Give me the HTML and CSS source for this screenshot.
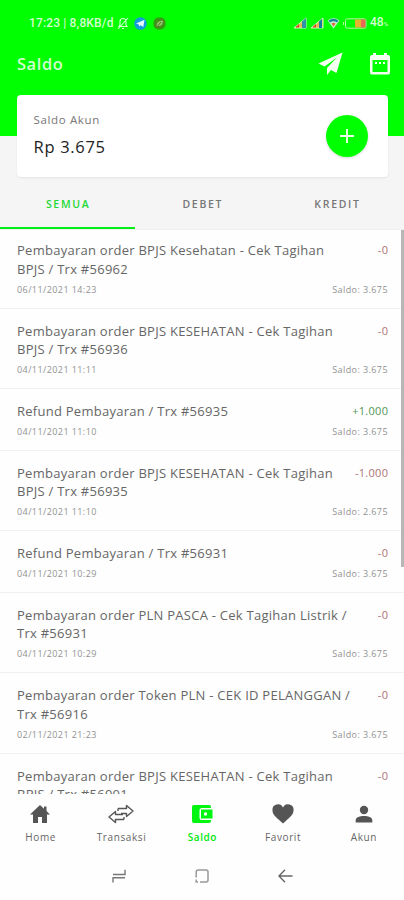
FILE: index.html
```
<!DOCTYPE html>
<html lang="id">
<head>
<meta charset="utf-8">
<title>Saldo</title>
<link rel="stylesheet" href="styles.css">
</head>
<body>
<div class="app">
  <header class="hero">
    <div class="status">
      <div class="status-left">
        <span class="clock">17:23 | 8,8KB/d</span>
        <svg class="bell" width="12" height="13" viewBox="0 0 12 13" fill="none" stroke="#d3ffd0" stroke-width="1.1"><path d="M2 9.5h8L9 8V4.500a3 3 0 0 0-6 0V8zM5 11.500h2M1 12 11 1"/></svg>
        <svg class="telegram" width="13" height="13" viewBox="0 0 13 13"><circle cx="6.500" cy="6.500" r="6.300" fill="#139bdc"/><path d="M2 6.500 10.500 2.800 9.300 10 6.500 8.300 5 9.500 4.800 7.500z" fill="#e4faff"/></svg>
        <svg width="13" height="13" viewBox="0 0 13 13"><rect x=".5" y=".5" width="12" height="12" rx="5" fill="#369b12"/><path d="M3 9.500C3 5 6 3 10.500 3c0 5-2.500 7-6 6.500M3 11l5-6" fill="#8fca67" stroke="#55752b"/></svg>
      </div>
      <div class="status-right">
        <svg width="14" height="12" viewBox="0 0 14 12"><path d="M1 11 13 1v10z" fill="#e6b653" stroke="#c9ffc0"/><path d="M9 4.500 13 1v10H9z" fill="#2f93a8"/><path d="m3 9.500 3-2.500v3.500H3z" fill="#d64a32"/></svg>
        <svg width="14" height="12" viewBox="0 0 14 12"><path d="M1 11 13 1v10z" fill="#e6b653" stroke="#c9ffc0"/><path d="M9 4.500 12 2v9H9z" fill="#147da0"/><path d="m3 9.500 3-2.500v3.500H3z" fill="#d64a32"/></svg>
        <svg width="13" height="12" viewBox="0 0 13 12"><path d="M.5 3.500Q6.500-1.500 12.500 3.500L6.500 11.500z" fill="#c4efcb"/><path d="M1.500 3.700Q6.500 0 11.500 3.700L10 5.500Q6.500 3 3 5.500z" fill="#16869b"/><path d="M4.500 6.500q2-1.300 4 0l-2 3z" fill="#dd6540"/></svg>
        <svg class="battery" width="24" height="11" viewBox="0 0 24 11"><rect x="2.500" y=".8" width="20.500" height="9.400" rx="1.800" fill="none" stroke="#b5f5a0"/><path d="M.5 4v3" stroke="#b5f5a0"/><path d="M12 1.500h6v8h-6z" fill="#e5b52f"/><path d="M18 1.500h4.500v8H18z" fill="#eb6857"/></svg>
        <span class="percent">48<small>%</small></span>
      </div>
    </div>
    <div class="toolbar">
      <h1>Saldo</h1>
      <div class="actions">
        <svg width="25" height="24" viewBox="0 0 25 24" fill="#f4fff2"><path d="M.5 11.500 24.500.5 18.500 21l-5.500-3-4 5v-7L19 5.500 6.500 14.500z"/></svg>
        <svg width="20" height="22" viewBox="0 0 20 22"><path fill="#f4fff2" fill-rule="evenodd" d="M3 0h3v2h8V0h3v2h1q2 0 2 2v15.500q0 2-2 2H2q-2 0-2-2V4q0-2 2-2h1zM2.500 7v12h15V7zM5 9h2v2H5zm4 0h2v2H9zm4 0h2v2h-2z"/></svg>
      </div>
    </div>
  </header>

  <section class="balance">
    <div><div class="balance-label">Saldo Akun</div><div class="balance-value">Rp 3.675</div></div>
    <div class="add"><svg width="14" height="14" viewBox="0 0 14 14" stroke="#eaffea" stroke-width="1.900"><path d="M7 0v14M0 7h14"/></svg></div>
  </section>

  <nav class="tabs"><div class="tab active">SEMUA</div><div class="tab">DEBET</div><div class="tab">KREDIT</div></nav>

  <main class="list">
    <article class="row"><div class="top"><p>Pembayaran order BPJS Kesehatan - Cek Tagihan<br>BPJS / Trx #56962</p><span class="minus">-0</span></div><div class="meta"><span>06/11/2021 14:23</span><span class="after">Saldo: 3.675</span></div></article>
    <article class="row"><div class="top"><p>Pembayaran order BPJS KESEHATAN - Cek Tagihan<br>BPJS / Trx #56936</p><span class="minus">-0</span></div><div class="meta"><span>04/11/2021 11:11</span><span class="after">Saldo: 3.675</span></div></article>
    <article class="row"><div class="top"><p>Refund Pembayaran / Trx #56935</p><span class="plus">+1.000</span></div><div class="meta"><span>04/11/2021 11:10</span><span class="after">Saldo: 3.675</span></div></article>
    <article class="row"><div class="top"><p>Pembayaran order BPJS KESEHATAN - Cek Tagihan<br>BPJS / Trx #56935</p><span class="minus">-1.000</span></div><div class="meta"><span>04/11/2021 11:10</span><span class="after">Saldo: 2.675</span></div></article>
    <article class="row"><div class="top"><p>Refund Pembayaran / Trx #56931</p><span class="minus">-0</span></div><div class="meta"><span>04/11/2021 10:29</span><span class="after">Saldo: 3.675</span></div></article>
    <article class="row"><div class="top"><p>Pembayaran order PLN PASCA - Cek Tagihan Listrik /<br>Trx #56931</p><span class="minus">-0</span></div><div class="meta"><span>04/11/2021 10:29</span><span class="after">Saldo: 3.675</span></div></article>
    <article class="row"><div class="top"><p>Pembayaran order Token PLN - CEK ID PELANGGAN /<br>Trx #56916</p><span class="minus">-0</span></div><div class="meta"><span>02/11/2021 21:23</span><span class="after">Saldo: 3.675</span></div></article>
    <article class="row"><div class="top"><p>Pembayaran order BPJS KESEHATAN - Cek Tagihan<br>BPJS / Trx #56901</p><span class="minus">-0</span></div></article>
    <div class="scrollbar"></div>
  </main>

  <nav class="bottom">
    <div class="item"><svg width="20" height="20" viewBox="0 0 20 20" fill="#555"><path d="M10 1 0 10.500h3V19h5v-6h4v6h5v-8.500h3L16.500 7V2.500H14v2.200z"/></svg><span>Home</span></div>
    <div class="item"><svg width="26" height="20" viewBox="0 0 26 20" fill="none" stroke="#555" stroke-width="1.400" stroke-linejoin="round"><path d="M10 4.500h8.500V1.500L25 7l-6.500 5.500V9.500H13M15 10.500H7.500V7.500L1 13l6.500 5.500V15.500H16M10 4.500v2.500M16 15.500V13"/></svg><span>Transaksi</span></div>
    <div class="item active"><svg width="21" height="20" viewBox="0 0 21 20" fill="#00f610"><path d="M2 1h15q2 0 2 2v1H10Q7.500 4 7.500 6.500v7Q7.500 16 10 16h9v1q0 2-2 2H2q-2 0-2-2V3q0-2 2-2z"/><path fill-rule="evenodd" d="M9 5.500h11.500v9H9zM13.500 8.300a1.700 1.700 0 1 0 .01 3.400 1.700 1.700 0 0 0-.01-3.400z"/></svg><span>Saldo</span></div>
    <div class="item"><svg width="22" height="20" viewBox="0 0 22 20" fill="#555"><path d="M11 19.500 9 17.700C3 12.500.5 10 .5 6.500a5.500 5.500 0 0 1 10.500-2.900A5.500 5.500 0 0 1 21.500 6.500c0 3.500-2.500 6-8.500 11.200z"/></svg><span>Favorit</span></div>
    <div class="item"><svg width="18" height="20" viewBox="0 0 18 20" fill="#555"><circle cx="9" cy="6" r="4.200"/><path d="M.7 18.500v-2.200C.7 13.300 5 12 9 12s8.300 1.300 8.300 4.300v2.200z"/></svg><span>Akun</span></div>
  </nav>

  <footer class="system">
    <svg width="14" height="14" viewBox="0 0 14 14" fill="none" stroke="#777" stroke-width="1.400"><path d="M1 5.500h12V.8M13 8.800H1V13.500"/></svg>
    <svg width="14" height="14" viewBox="0 0 14 14" fill="none" stroke="#999" stroke-width="1.500"><path d="M1.200 8.500V3q0-2 2-2H9M5 1h6q2 0 2 2v8q0 2-2 2H5M1.200 10.500V13H3"/></svg>
    <svg width="15" height="14" viewBox="0 0 15 14" fill="none" stroke="#666" stroke-width="1.400"><path d="M14.500 7H1.200M7 .8 1 7l6 6.200"/></svg>
  </footer>
</div>
</body>
</html>
```
FILE: styles.css
```
* { box-sizing: border-box; }
body { margin: 0; background: #fefefe; font-family: "Open Sans", sans-serif; }
svg { display: block; flex: none; }
.app { width: 404px; height: 900px; overflow: hidden; display: flex; flex-direction: column; background: #fefefe; }

.hero { height: 136px; background: #00ff00; flex: none; }
.status { display: flex; justify-content: space-between; padding: 16px 16px 0 29px; height: 38px; color: #d3ffd0; font: 500 12px/14px Roboto, sans-serif; }
.status-left, .status-right { display: flex; align-items: center; height: 14px; }
.clock { width: 85px; letter-spacing: .15px; white-space: nowrap; }
.bell { margin: 0 5px 0 3px; }
.telegram { margin-right: 6px; }
.status-right { gap: 3px; margin-right: -2px; }
.percent { font-size: 12px; width: 20px; white-space: nowrap; }
.percent small { font-size: 6px; }
.toolbar { display: flex; justify-content: space-between; align-items: center; height: 52px; padding: 0 14px 0 17px; }
h1 { margin: 0; font-size: 16.5px; line-height: 24px; font-weight: 600; color: #d3ffd0; letter-spacing: .55px; }
.actions { display: flex; gap: 27px; align-items: center; }

.balance { position: relative; z-index: 1; margin: -41px 16px 0 17px; height: 82px; flex: none; background: #fff; border-radius: 4px; box-shadow: 0 1px 2px rgba(0,0,0,.08); display: flex; justify-content: space-between; align-items: center; padding: 0 20px 0 16.500px; }
.balance-label { font-size: 11.5px; line-height: 16px; color: #777; letter-spacing: .65px; margin-top: -2px; }
.balance-value { font-size: 16.500px; line-height: 24px; margin-top: 7px; color: #222; letter-spacing: .7px; }
.add { width: 42px; height: 42px; border-radius: 50%; background: #00ff00; display: flex; align-items: center; justify-content: center; box-shadow: 0 1px 3px rgba(0,0,0,.15); }

.tabs { display: grid; grid-template-columns: repeat(3, 1fr); height: 94px; margin-top: -41px; padding-top: 41px; background: #f5f5f5; flex: none; border-bottom: 1px solid #efefef; }
.tab { height: 52px; font-size: 10.500px; line-height: 52px; font-weight: 600; letter-spacing: 1.700px; text-indent: 1.700px; text-align: center; color: #777; padding-top: 1px; }
.tab.active { color: #22d936; border-bottom: 2px solid #00ef16; }

.list { position: relative; height: 565px; flex: none; overflow: hidden; margin-top: -1.500px; }
.row { border-bottom: 1px solid #f1f1f1; padding: 12.700px 16px 0 17px; height: 80.400px; }
.row:nth-child(3), .row:nth-child(5) { height: 61.700px; }
.top { display: flex; justify-content: space-between; }
.top p { margin: 0; font-size: 13px; line-height: 18.700px; letter-spacing: .26px; color: #666; white-space: nowrap; }
.top span { font-size: 11px; line-height: 17.500px; letter-spacing: .3px; margin-right: -.3px; }
.minus { color: #ad7474; }
.plus { color: #529553; }
.meta { display: flex; justify-content: space-between; font-size: 9px; line-height: 14px; letter-spacing: .42px; margin-top: 4px; color: #929292; }
.scrollbar { position: absolute; right: 0; top: 1px; width: 3px; height: 337px; background: #b7b7b7; }

.bottom { height: 56px; flex: none; display: grid; grid-template-columns: repeat(5, 1fr); padding-top: 10.500px; background: #fefefe; }
.item { display: flex; flex-direction: column; align-items: center; font-size: 10px; line-height: 14px; letter-spacing: .6px; text-indent: .6px; color: #666; }
.item span { margin-top: 6px; }
.item.active { color: #00e810; font-weight: 600; letter-spacing: .5px; }
.item.active svg { margin-left: 2px; }
.system { display: flex; justify-content: space-between; padding: 19.500px 111px 0 112px; }
```
